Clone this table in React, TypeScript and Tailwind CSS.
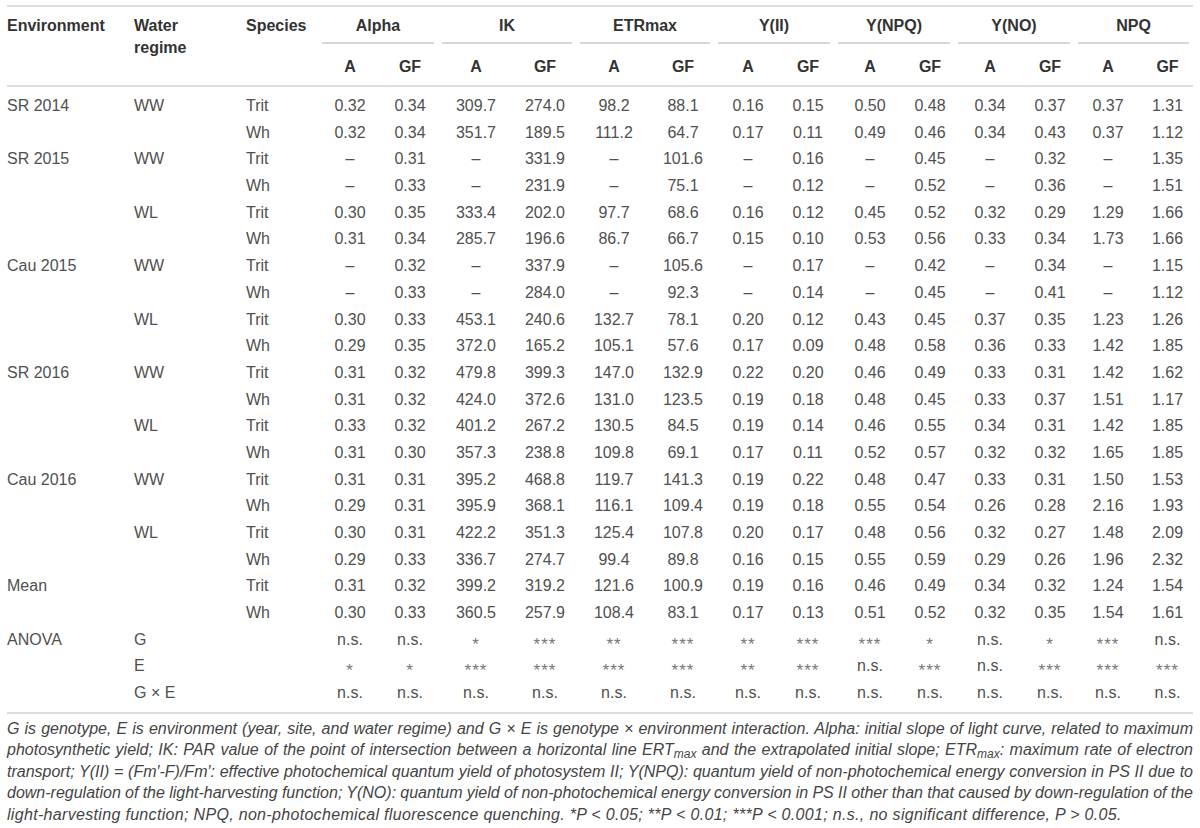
import React from "react";

const COLS =
  "grid grid-cols-[127px_112px_72px_64px_56px_76px_62px_76px_62px_68px_52px_72px_48px_72px_48px_68px_51px]";

const groups = ["Alpha", "IK", "ETRmax", "Y(II)", "Y(NPQ)", "Y(NO)", "NPQ"];

type Row = [string, string, string, string];

const rows: Row[] = [
  ["SR 2014", "WW", "Trit", "0.32 0.34 309.7 274.0 98.2 88.1 0.16 0.15 0.50 0.48 0.34 0.37 0.37 1.31"],
  ["", "", "Wh", "0.32 0.34 351.7 189.5 111.2 64.7 0.17 0.11 0.49 0.46 0.34 0.43 0.37 1.12"],
  ["SR 2015", "WW", "Trit", "– 0.31 – 331.9 – 101.6 – 0.16 – 0.45 – 0.32 – 1.35"],
  ["", "", "Wh", "– 0.33 – 231.9 – 75.1 – 0.12 – 0.52 – 0.36 – 1.51"],
  ["", "WL", "Trit", "0.30 0.35 333.4 202.0 97.7 68.6 0.16 0.12 0.45 0.52 0.32 0.29 1.29 1.66"],
  ["", "", "Wh", "0.31 0.34 285.7 196.6 86.7 66.7 0.15 0.10 0.53 0.56 0.33 0.34 1.73 1.66"],
  ["Cau 2015", "WW", "Trit", "– 0.32 – 337.9 – 105.6 – 0.17 – 0.42 – 0.34 – 1.15"],
  ["", "", "Wh", "– 0.33 – 284.0 – 92.3 – 0.14 – 0.45 – 0.41 – 1.12"],
  ["", "WL", "Trit", "0.30 0.33 453.1 240.6 132.7 78.1 0.20 0.12 0.43 0.45 0.37 0.35 1.23 1.26"],
  ["", "", "Wh", "0.29 0.35 372.0 165.2 105.1 57.6 0.17 0.09 0.48 0.58 0.36 0.33 1.42 1.85"],
  ["SR 2016", "WW", "Trit", "0.31 0.32 479.8 399.3 147.0 132.9 0.22 0.20 0.46 0.49 0.33 0.31 1.42 1.62"],
  ["", "", "Wh", "0.31 0.32 424.0 372.6 131.0 123.5 0.19 0.18 0.48 0.45 0.33 0.37 1.51 1.17"],
  ["", "WL", "Trit", "0.33 0.32 401.2 267.2 130.5 84.5 0.19 0.14 0.46 0.55 0.34 0.31 1.42 1.85"],
  ["", "", "Wh", "0.31 0.30 357.3 238.8 109.8 69.1 0.17 0.11 0.52 0.57 0.32 0.32 1.65 1.85"],
  ["Cau 2016", "WW", "Trit", "0.31 0.31 395.2 468.8 119.7 141.3 0.19 0.22 0.48 0.47 0.33 0.31 1.50 1.53"],
  ["", "", "Wh", "0.29 0.31 395.9 368.1 116.1 109.4 0.19 0.18 0.55 0.54 0.26 0.28 2.16 1.93"],
  ["", "WL", "Trit", "0.30 0.31 422.2 351.3 125.4 107.8 0.20 0.17 0.48 0.56 0.32 0.27 1.48 2.09"],
  ["", "", "Wh", "0.29 0.33 336.7 274.7 99.4 89.8 0.16 0.15 0.55 0.59 0.29 0.26 1.96 2.32"],
  ["Mean", "", "Trit", "0.31 0.32 399.2 319.2 121.6 100.9 0.19 0.16 0.46 0.49 0.34 0.32 1.24 1.54"],
  ["", "", "Wh", "0.30 0.33 360.5 257.9 108.4 83.1 0.17 0.13 0.51 0.52 0.32 0.35 1.54 1.61"],
  ["ANOVA", "G", "", "n.s. n.s. * *** ** *** ** *** *** * n.s. * *** n.s."],
  ["", "E", "", "* * *** *** *** *** ** *** n.s. *** n.s. *** *** ***"],
  ["", "G × E", "", "n.s. n.s. n.s. n.s. n.s. n.s. n.s. n.s. n.s. n.s. n.s. n.s. n.s. n.s."],
];

function Cell({ v }: { v: string }) {
  if (/^\*+$/.test(v)) {
    return (
      <div className="text-center text-[#777]">
        <span className="relative top-[5px] text-[17px] tracking-[1px]">{v}</span>
      </div>
    );
  }
  return <div className="text-center">{v}</div>;
}

const lineCls = "whitespace-nowrap text-justify [text-align-last:justify] [word-spacing:-1.5px]";

export default function App() {
  return (
    <div className="w-[1200px] h-[828px] bg-white overflow-hidden [font-family:'Liberation_Sans',Arial,Helvetica,sans-serif]">
      <div className="mx-[7px] w-[1186px] pt-[5px]">
        <div className="border-t-2 border-[#dedede]">
          {/* header */}
          <div className={`${COLS} border-b-2 border-[#dedede] text-[16px] font-bold text-[#333] leading-[22px]`}>
            <div className="row-span-2 pt-2">Environment</div>
            <div className="row-span-2 pt-2">
              Water
              <br />
              regime
            </div>
            <div className="row-span-2 pt-2">Species</div>
            {groups.map((g) => (
              <div key={g} className="col-span-2 px-1 pt-2">
                <div className="border-b-2 border-[#d6d6d6] pb-[5px] text-center">{g}</div>
              </div>
            ))}
            {groups.map((g) => (
              <React.Fragment key={g + "-sub"}>
                <div className="pt-3 pb-[7px] text-center">A</div>
                <div className="pt-3 pb-[7px] text-center">GF</div>
              </React.Fragment>
            ))}
          </div>

          {/* body */}
          <div className="border-b-2 border-[#dedede] pt-[6px] pb-[5px] text-[16px] text-[#505050] leading-[26.7px]">
            {rows.map((r, i) => (
              <div key={i} className={`${COLS} h-[26.7px]`}>
                <div>{r[0]}</div>
                <div>{r[1]}</div>
                <div>{r[2]}</div>
                {r[3].split(" ").map((v, j) => (
                  <Cell key={j} v={v} />
                ))}
              </div>
            ))}
          </div>
        </div>

        {/* caption */}
        <div className="mt-[4px] text-[16px] italic leading-[21.5px] text-[#444]">
          <div className={lineCls}>
            G is genotype, E is environment (year, site, and water regime) and G × E is genotype × environment interaction. Alpha: initial slope of light curve, related to maximum
          </div>
          <div className={lineCls}>
            photosynthetic yield; IK: PAR value of the point of intersection between a horizontal line ERT<sub>max</sub> and the extrapolated initial slope; ETR<sub>max</sub>: maximum rate of electron
          </div>
          <div className={lineCls}>
            transport; Y(II) = (Fm′-F)/Fm′: effective photochemical quantum yield of photosystem II; Y(NPQ): quantum yield of non-photochemical energy conversion in PS II due to
          </div>
          <div className={lineCls}>
            down-regulation of the light-harvesting function; Y(NO): quantum yield of non-photochemical energy conversion in PS II other than that caused by down-regulation of the
          </div>
          <div className="whitespace-nowrap tracking-[0.32px]">
            light-harvesting function; NPQ, non-photochemical fluorescence quenching. *P &lt; 0.05; **P &lt; 0.01; ***P &lt; 0.001; n.s., no significant difference, P &gt; 0.05.
          </div>
        </div>
      </div>
    </div>
  );
}
